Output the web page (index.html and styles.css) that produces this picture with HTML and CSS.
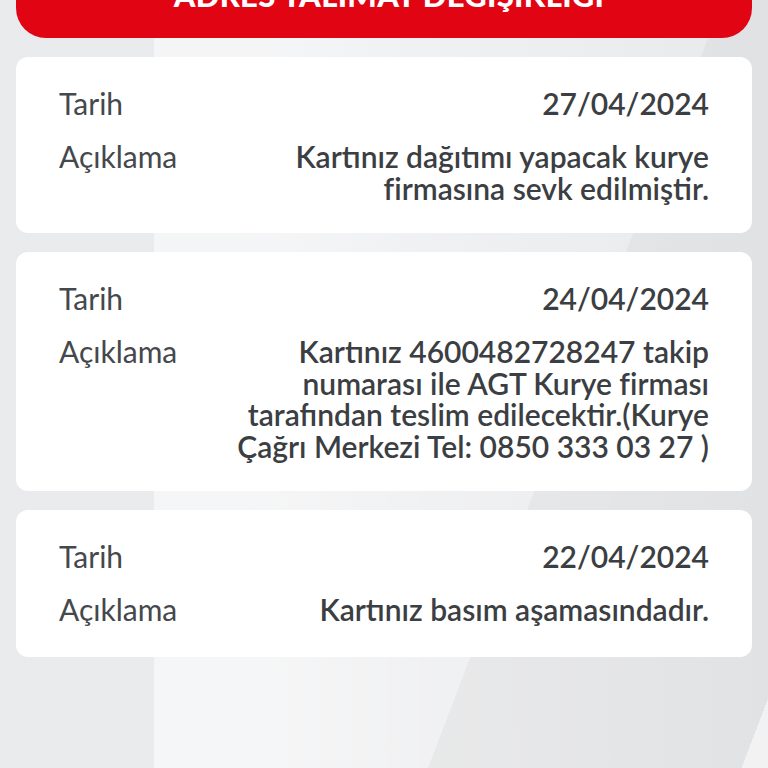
FILE: index.html
```html
<!DOCTYPE html>
<html lang="tr">
<head>
<meta charset="utf-8">
<title>Kart Takip</title>
<link rel="stylesheet" href="styles.css">
</head>
<body>
<div class="page">
  <button class="action-btn">ADRES TALİMAT DEĞİŞİKLİĞİ</button>

  <div class="card">
    <div class="label">Tarih</div>
    <div class="value">27/04/2024</div>
    <div class="label">Açıklama</div>
    <div class="value">Kartınız dağıtımı yapacak kurye firmasına sevk edilmiştir.</div>
  </div>

  <div class="card">
    <div class="label">Tarih</div>
    <div class="value">24/04/2024</div>
    <div class="label">Açıklama</div>
    <div class="value">Kartınız 4600482728247 takip numarası ile AGT Kurye firması tarafından teslim edilecektir.(Kurye Çağrı Merkezi Tel: 0850 333 03 27 )</div>
  </div>

  <div class="card card-last">
    <div class="label">Tarih</div>
    <div class="value">22/04/2024</div>
    <div class="label">Açıklama</div>
    <div class="value">Kartınız basım aşamasındadır.</div>
  </div>
</div>
</body>
</html>
```

FILE: styles.css
```css
html, body {
  margin: 0;
  padding: 0;
}

body {
  width: 768px;
  height: 768px;
  overflow: hidden;
  font-family: "Lato", "Open Sans", sans-serif;
  background-color: #e3e5e7;
  background-image:
    linear-gradient(111deg, transparent 0 97.5%, rgba(255,255,255,0.55) 97.5%),
    linear-gradient(111deg, transparent 0 68%, rgba(0,0,0,0.035) 68%),
    linear-gradient(90deg, rgba(255,255,255,0.15) 0 20%, rgba(255,255,255,0.6) 20% 36%, rgba(255,255,255,0.4) 56%, rgba(255,255,255,0.1) 100%),
    linear-gradient(180deg, #e5e7e9 0%, #e7e8ea 100%);
}

.page {
  display: flex;
  flex-direction: column;
  gap: 19px;
  padding: 0 16px;
}

.action-btn {
  margin-top: -40px;
  height: 78px;
  border: 0;
  border-radius: 30px;
  background: #e10514;
  color: #ffffff;
  font-family: "Lato", sans-serif;
  font-weight: 900;
  font-size: 31px;
  line-height: 31px;
  letter-spacing: 0.3px;
  padding: 0 0 27px 10px;
  display: flex;
  align-items: flex-end;
  justify-content: center;
}

.card {
  background: #ffffff;
  border-radius: 12px;
  padding: 31px 43px 29px;
  display: grid;
  grid-template-columns: 1fr 480px;
  row-gap: 21.5px;
  align-items: start;
}

.card-last {
  padding-bottom: 31px;
}

.label {
  font-size: 30px;
  line-height: 31.5px;
  font-weight: 400;
  color: #45484c;
}

.value {
  font-size: 30px;
  line-height: 31.5px;
  font-weight: 600;
  color: #3b3e42;
  text-align: right;
}
```
